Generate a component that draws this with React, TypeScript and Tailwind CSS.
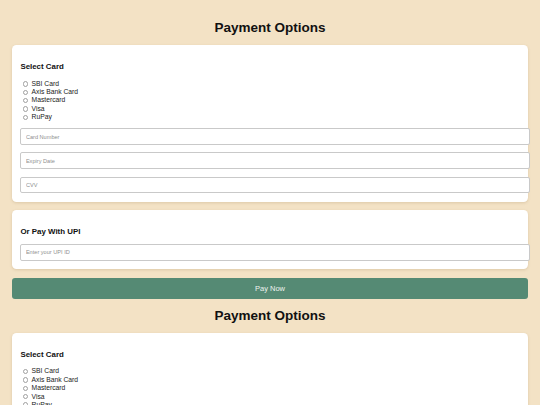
import React from "react";

const cards = ["SBI Card", "Axis Bank Card", "Mastercard", "Visa", "RuPay"];

function Field({ placeholder, className = "" }: { placeholder: string; className?: string }) {
  return (
    <input
      type="text"
      placeholder={placeholder}
      className={`block h-[16.8px] w-[calc(100%+10px)] rounded-[2px] border border-[#c9c9c9] bg-white px-[4.5px] text-[5.6px] text-[#333] outline-none placeholder:text-[#8f8f8f] ${className}`}
      style={{ fontFamily: '"Liberation Sans", Arial, sans-serif' }}
    />
  );
}

function Section() {
  return (
    <div>
      <h2 className="flex h-[34.2px] items-center justify-center text-[13.5px] font-bold leading-none text-[#111]">
        Payment Options
      </h2>
      <div className="rounded-[4.5px] bg-white px-[8.4px] pb-[8.4px] pt-[8px] shadow-[0_1px_3px_rgba(120,90,40,0.18)]">
        <h3 className="mt-[9px] mb-[8.5px] h-[9px] text-[7.9px] font-bold leading-[9px] text-[#111]">
          Select Card
        </h3>
        <div className="flex flex-col">
          {cards.map((c) => (
            <label key={c} className="flex h-[8.4px] items-center text-[6.75px] leading-[8.4px] text-[#222]">
              <span className="ml-[2.4px] mr-[3.4px] inline-block h-[5.4px] w-[5.4px] rounded-full border border-[#a0a0a0] bg-white" />
              {c}
            </label>
          ))}
        </div>
        <div className="mt-[6.5px] flex flex-col gap-[7.4px]">
          <Field placeholder="Card Number" />
          <Field placeholder="Expiry Date" />
          <Field placeholder="CVV" />
        </div>
      </div>
      <div className="mt-[8.4px] rounded-[4.5px] bg-white px-[8.4px] pb-[8.4px] pt-[8px] shadow-[0_1px_3px_rgba(120,90,40,0.18)]">
        <h3 className="mt-[9px] mb-[8px] h-[9px] text-[7.9px] font-bold leading-[9px] text-[#111]">
          Or Pay With UPI
        </h3>
        <Field placeholder="Enter your UPI ID" className="mt-[0.3px]" />
      </div>
      <button className="mt-[8.4px] flex h-[21px] w-full items-center justify-center rounded-[3px] bg-[#558a74] text-[7.5px] text-[#eef3ef]">
        Pay Now
      </button>
    </div>
  );
}

export default function App() {
  return (
    <div
      className="h-[405px] w-[540px] overflow-hidden bg-[#f3e2c5] px-[12px] pt-[11px]"
      style={{ fontFamily: '"Liberation Sans", Arial, Helvetica, sans-serif' }}
    >
      <Section />
      <Section />
    </div>
  );
}
